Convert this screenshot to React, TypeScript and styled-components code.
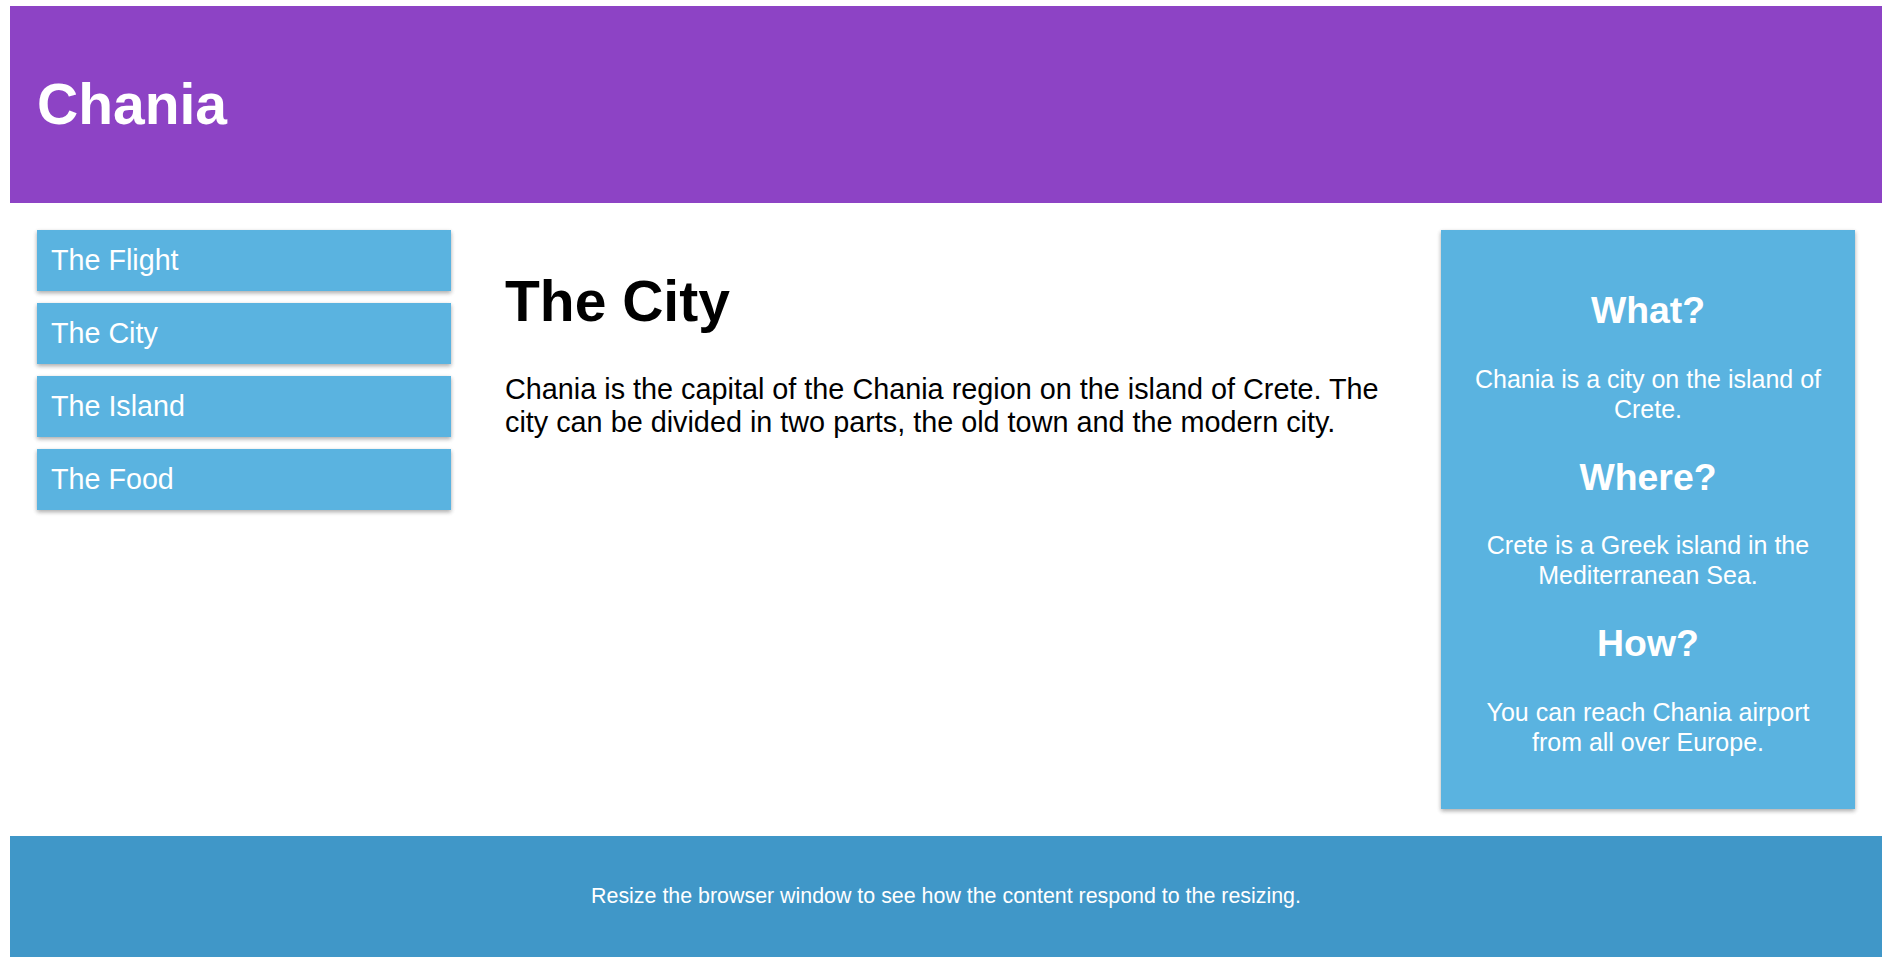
import React from "react";
import styled, { createGlobalStyle } from "styled-components";

const GlobalStyle = createGlobalStyle`
  * { box-sizing: border-box; }
  html, body { background: #ffffff; }
  body {
    margin: 6px 6px 4px 10px;
    font-family: "Liberation Sans", Arial, Helvetica, sans-serif;
    color: #000000;
  }
`;

const Header = styled.header`
  background-color: #8d43c5;
  color: #ffffff;
  padding: 27.2px 27px;
`;

const HeaderTitle = styled.h1`
  margin: 39px 0;
  font-size: 57px;
  line-height: 65px;
  font-weight: 700;
`;

const Row = styled.div`
  display: flex;
  align-items: flex-start;
`;

const Column = styled.div<{ $span: number }>`
  flex: 0 0 ${(p) => (p.$span / 12) * 100}%;
  max-width: ${(p) => (p.$span / 12) * 100}%;
  padding: 27px;
`;

const MenuList = styled.ul`
  list-style: none;
  margin: 0;
  padding: 0;
`;

const MenuItem = styled.li`
  padding: 14px;
  margin-bottom: 12px;
  background-color: #5ab3e0;
  color: #ffffff;
  font-size: 28.7px;
  line-height: 33px;
  box-shadow: 0 2px 5px rgba(0, 0, 0, 0.12), 0 2px 4px rgba(0, 0, 0, 0.24);
  cursor: pointer;
  &:hover {
    background-color: #4097c8;
  }
`;

const PageTitle = styled.h1`
  margin: 39px 0;
  font-size: 57px;
  line-height: 65px;
  font-weight: 700;
`;

const BodyText = styled.p`
  margin: 28.5px 0;
  font-size: 28.8px;
  line-height: 32.5px;
`;

const Aside = styled.aside`
  background-color: #5ab3e0;
  padding: 27px;
  color: #ffffff;
  text-align: center;
  font-size: 25px;
  box-shadow: 0 2px 5px rgba(0, 0, 0, 0.12), 0 2px 4px rgba(0, 0, 0, 0.24);
`;

const AsideHeading = styled.h2`
  margin: 31.75px 0;
  font-size: 37.4px;
  line-height: 43px;
  font-weight: 700;
`;

const AsideText = styled.p`
  margin: 25px 0;
  line-height: 30px;
`;

const Footer = styled.footer`
  background-color: #4097c8;
  color: #ffffff;
  text-align: center;
  font-size: 21.4px;
  padding: 27px;
`;

const FooterText = styled.p`
  margin: 21.4px 0;
  line-height: 24.6px;
`;

const menu = ["The Flight", "The City", "The Island", "The Food"];

const facts = [
  { q: "What?", a: "Chania is a city on the island of Crete." },
  { q: "Where?", a: "Crete is a Greek island in the Mediterranean Sea." },
  { q: "How?", a: "You can reach Chania airport from all over Europe." },
];

export default function App() {
  return (
    <>
      <GlobalStyle />
      <Header>
        <HeaderTitle>Chania</HeaderTitle>
      </Header>
      <Row>
        <Column $span={3}>
          <MenuList>
            {menu.map((m) => (
              <MenuItem key={m}>{m}</MenuItem>
            ))}
          </MenuList>
        </Column>
        <Column $span={6}>
          <PageTitle>The City</PageTitle>
          <BodyText>
            Chania is the capital of the Chania region on the island of Crete. The city can be
            divided in two parts, the old town and the modern city.
          </BodyText>
        </Column>
        <Column $span={3}>
          <Aside>
            {facts.map((f) => (
              <React.Fragment key={f.q}>
                <AsideHeading>{f.q}</AsideHeading>
                <AsideText>{f.a}</AsideText>
              </React.Fragment>
            ))}
          </Aside>
        </Column>
      </Row>
      <Footer>
        <FooterText>Resize the browser window to see how the content respond to the resizing.</FooterText>
      </Footer>
    </>
  );
}
